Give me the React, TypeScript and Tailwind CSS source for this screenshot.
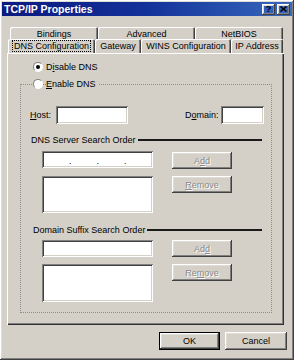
import type { ReactNode } from "react";

const raised =
  "shadow-[inset_-1px_-1px_#404040,inset_1px_1px_#ffffff,inset_-2px_-2px_#808080,inset_2px_2px_#dfdcd6]";
const sunken =
  "shadow-[inset_1px_1px_#808080,inset_-1px_-1px_#ffffff,inset_2px_2px_#404040,inset_-2px_-2px_#d4d0c8]";
const tabEdge = "shadow-[inset_1px_1px_#ffffff,inset_-1px_0_#404040,inset_-2px_0_#808080]";

function Radio({ checked, children }: { checked?: boolean; children: ReactNode }) {
  return (
    <div className="flex items-center">
      <span className="flex h-[10px] w-[10px] items-center justify-center rounded-full border border-t-[#808080] border-l-[#808080] border-r-white border-b-white bg-white">
        {checked ? <span className="h-[4px] w-[4px] rounded-full bg-black" /> : null}
      </span>
      <span className="ml-[3px] bg-[#d4d0c8] pr-[2px]">{children}</span>
    </div>
  );
}

function Field({ w, h, children }: { w: string; h: string; children?: ReactNode }) {
  return <div className={`${w} ${h} bg-white ${sunken}`}>{children}</div>;
}

function DisabledButton({ children }: { children: ReactNode }) {
  return (
    <div
      className={`flex h-[17px] w-[60px] items-center justify-center text-[#8a8a8a] [text-shadow:1px_1px_#ffffff] ${raised}`}
    >
      {children}
    </div>
  );
}

function Heading({ children, ml }: { children: ReactNode; ml: string }) {
  return (
    <div className={`flex h-[10px] items-center ${ml} mr-[9px]`}>
      <span className="whitespace-nowrap">{children}</span>
      <div className="ml-[2px] h-[2px] flex-1 bg-[#1a1a1a]" />
    </div>
  );
}

function ListPair({ listH, addLabel, removeLabel }: { listH: string; addLabel: ReactNode; removeLabel: ReactNode }) {
  return (
    <div className="flex">
      <div className="ml-[21px] flex w-[111px] flex-col gap-[7px]">
        <Field w="w-[111px]" h="h-[17px]">{null}</Field>
        <Field w="w-[111px]" h={listH} />
      </div>
      <div className="ml-[19px] flex flex-col gap-[7px]">
        <DisabledButton>{addLabel}</DisabledButton>
        <DisabledButton>{removeLabel}</DisabledButton>
      </div>
    </div>
  );
}

export default function App() {
  return (
    <div
      className={`flex h-[360px] w-[294px] flex-col bg-[#d4d0c8] p-[2px] font-['Liberation_Sans',Arial,sans-serif] text-[9px] leading-[10px] text-black ${raised}`}
    >
      {/* title bar */}
      <div className="flex h-[14px] items-center justify-between bg-gradient-to-r from-[#0b1a80] via-[#14319a] to-[#3a68bc] pl-[2px] pr-[2px]">
        <span className="text-[10.5px] font-bold text-white">TCP/IP Properties</span>
        <div className="flex gap-[2px]">
          <div className={`flex h-[11px] w-[13px] items-center justify-center text-[9px] font-bold ${raised}`}>?</div>
          <div className={`flex h-[11px] w-[13px] items-center justify-center ${raised}`}>
            <svg width="7" height="6" viewBox="0 0 7 6">
              <path d="M0.5 0.5 L6.5 5.5 M6.5 0.5 L0.5 5.5" stroke="#000" strokeWidth="1.5" />
            </svg>
          </div>
        </div>
      </div>

      {/* tabs, back row */}
      <div className="ml-[8px] mt-[11px] flex h-[12px]">
        <div className={`flex w-[88px] items-center justify-center rounded-t-[2px] pt-[2px] ${tabEdge}`}>Bindings</div>
        <div className={`flex w-[97px] items-center justify-center rounded-t-[2px] pt-[2px] ${tabEdge}`}>Advanced</div>
        <div className={`flex w-[88px] items-center justify-center rounded-t-[2px] pt-[2px] ${tabEdge}`}>NetBIOS</div>
      </div>
      {/* tabs, front row */}
      <div className="ml-[6px] flex h-[14px]">
        <div className={`flex w-[87px] items-center justify-center rounded-t-[2px] ${tabEdge}`}>
          <span className="border border-dotted border-black px-[1px]">DNS Configuration</span>
        </div>
        <div className={`flex w-[46px] items-center justify-center rounded-t-[2px] ${tabEdge}`}>Gateway</div>
        <div className={`flex w-[90px] items-center justify-center rounded-t-[2px] ${tabEdge}`}>WINS Configuration</div>
        <div className={`flex w-[52px] items-center justify-center rounded-t-[2px] ${tabEdge}`}>IP Address</div>
      </div>

      {/* tab panel */}
      <div
        className="ml-[5px] flex h-[272px] w-[277px] flex-col shadow-[inset_1px_1px_#ffffff,inset_-1px_-1px_#303030,inset_-2px_-2px_#808080]"
      >
        <div className="ml-[26px] mt-[9px]">
          <Radio checked>
            D<span className="underline">i</span>sable DNS
          </Radio>
        </div>

        <div className="relative ml-[13px] mt-[12px] h-[229px] w-[252px] border border-dotted border-[#8c8c8c]">
          <div className="absolute -top-[6px] left-[12px]">
            <Radio>
              <span className="underline">E</span>nable DNS
            </Radio>
          </div>

          <div className="ml-[9px] mt-[21px] flex h-[18px] items-center">
            <span className="w-[26px]">
              <span className="underline">H</span>ost:
            </span>
            <Field w="w-[72px]" h="h-[18px]" />
            <span className="ml-[57px] whitespace-nowrap">
              D<span className="underline">o</span>main:
            </span>
            <div className="ml-[2px]">
              <Field w="w-[43px]" h="h-[18px]" />
            </div>
          </div>

          <div className="mt-[11px]">
            <Heading ml="ml-[10px]">DNS Server Search Order</Heading>
          </div>
          <div className="mt-[6px] flex">
            <div className="ml-[21px] flex w-[111px] flex-col gap-[8px]">
              <div className={`flex h-[17px] w-[111px] items-end bg-white pb-[2px] ${sunken}`}>
                <span className="ml-[27px]">.</span>
                <span className="ml-[25px]">.</span>
                <span className="ml-[25px]">.</span>
              </div>
              <Field w="w-[111px]" h="h-[37px]" />
            </div>
            <div className="ml-[19px] mt-[1px] flex flex-col gap-[7px]">
              <DisabledButton>
                A<span className="underline">d</span>d
              </DisabledButton>
              <DisabledButton>
                <span className="underline">R</span>emove
              </DisabledButton>
            </div>
          </div>

          <div className="mt-[12px]">
            <Heading ml="ml-[12px]">Domain Suffix Search Order</Heading>
          </div>
          <div className="mt-[5px]">
            <ListPair
              listH="h-[38px]"
              addLabel={
                <>
                  Ad<span className="underline">d</span>
                </>
              }
              removeLabel={
                <>
                  Re<span className="underline">m</span>ove
                </>
              }
            />
          </div>
        </div>
      </div>

      {/* dialog buttons */}
      <div className="mt-[7px] flex justify-end gap-[5px] pr-[5px]">
        <div className={`flex h-[18px] w-[61px] items-center justify-center border border-black ${raised}`}>OK</div>
        <div className={`flex h-[18px] w-[62px] items-center justify-center ${raised}`}>Cancel</div>
      </div>
    </div>
  );
}
